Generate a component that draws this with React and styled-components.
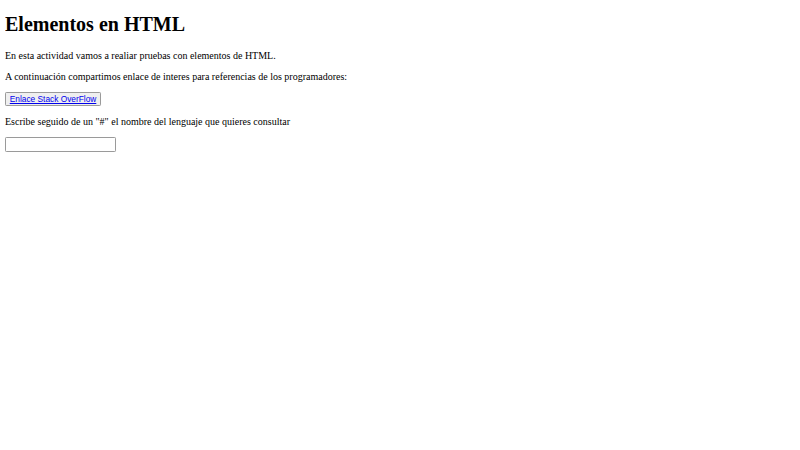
import React from "react";
import styled, { createGlobalStyle } from "styled-components";

const Global = createGlobalStyle`
  html, body { background: #ffffff; }
  body {
    margin: 5px;
    font-family: "Liberation Serif", "Times New Roman", serif;
    font-size: 10px;
    color: #000000;
  }
`;

const Title = styled.h1`
  font-size: 20px;
  font-weight: bold;
  margin: 8.4px 0 13.4px;
`;

const Paragraph = styled.p`
  margin: 10px 0;
`;

const LinkButton = styled.button`
  font-family: "Liberation Sans", Arial, sans-serif;
  font-size: 8.333px;
  padding: 1.1px 3.75px;
  margin: 0.5px 0 0;
  background: #efefef;
  border: 0.625px solid #9a9a9a;
  border-radius: 1.25px;
  line-height: normal;
  cursor: pointer;
`;

const Link = styled.a`
  color: #0000ee;
  text-decoration: underline;
`;

const SearchInput = styled.input`
  font-family: "Liberation Sans", Arial, sans-serif;
  font-size: 8.333px;
  width: 106px;
  padding: 1.1px 1.25px;
  margin: 0;
  border: 0.625px solid #9a9a9a;
  border-radius: 1.25px;
  background: #ffffff;
  outline: none;
`;

export default function App() {
  return (
    <>
      <Global />
      <Title>Elementos en HTML</Title>
      <Paragraph>En esta actividad vamos a realiar pruebas con elementos de HTML.</Paragraph>
      <Paragraph>A continuación compartimos enlace de interes para referencias de los programadores:</Paragraph>
      <LinkButton type="button">
        <Link href="https://stackoverflow.com">Enlace Stack OverFlow</Link>
      </LinkButton>
      <Paragraph>Escribe seguido de un "#" el nombre del lenguaje que quieres consultar</Paragraph>
      <SearchInput type="text" />
    </>
  );
}
